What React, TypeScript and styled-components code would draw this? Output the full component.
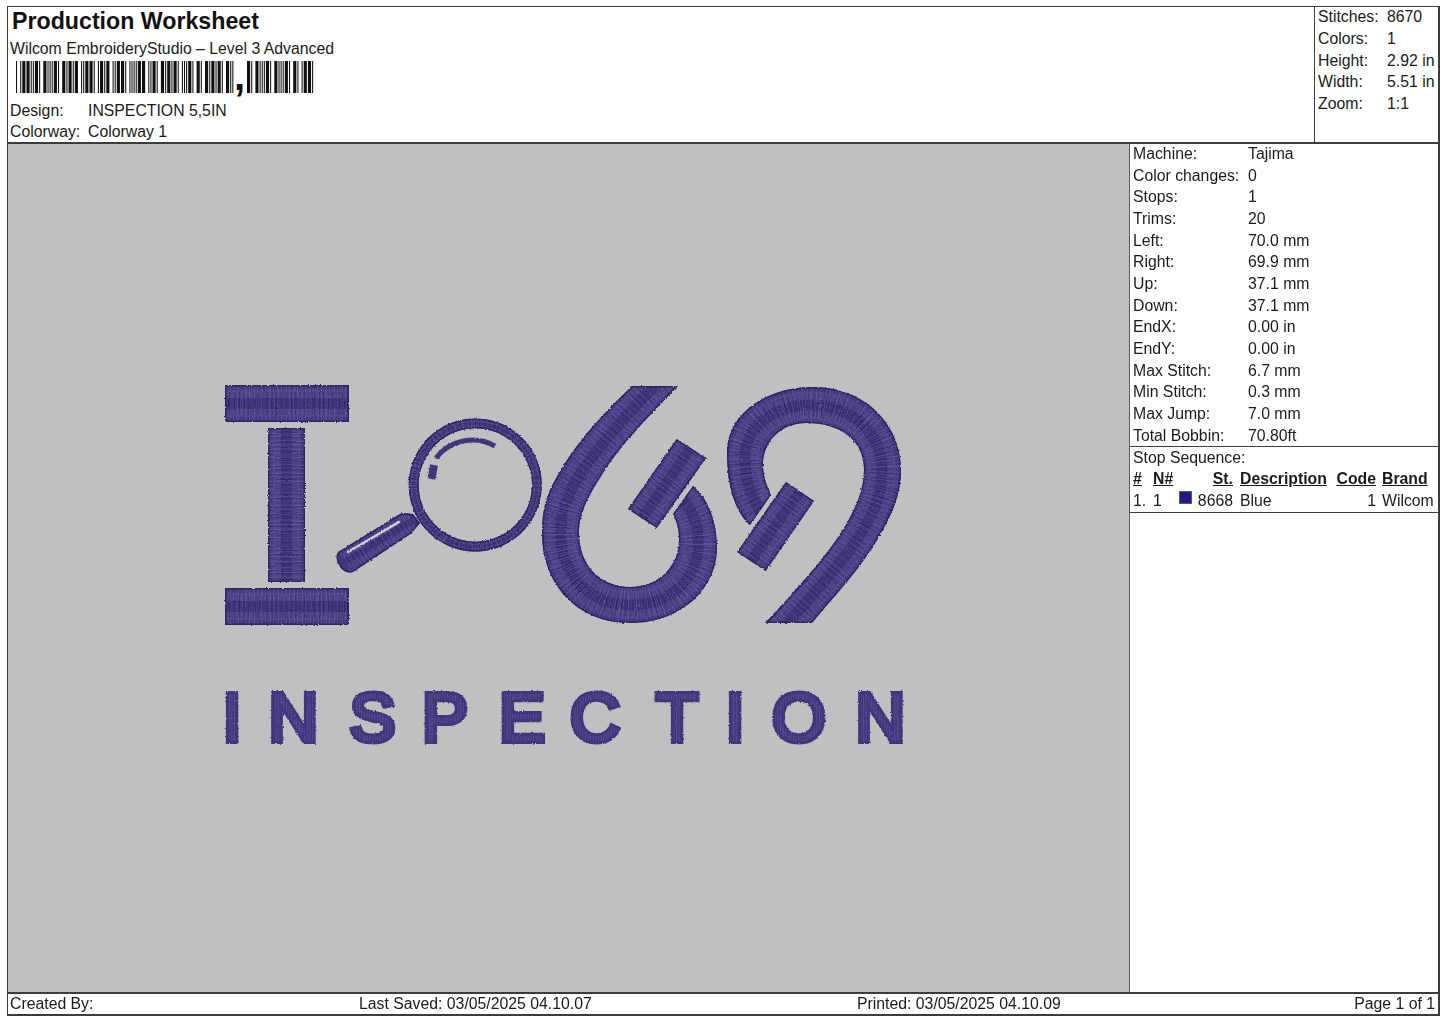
import styled, { createGlobalStyle } from "styled-components";

const GlobalSc = createGlobalStyle`
    html, body {
        margin: 0;
        background: #ffffff;
    }
    body {
        font-family: "Liberation Sans", Arial, sans-serif;
        font-size: 15.8px;
        color: #1a1a1a;
    }
`;

const SheetSc = styled.div`
    box-sizing: border-box;
    width: 1433px;
    height: 1010px;
    margin: 6px 0 0 7px;
    border: 1px solid #3c3c3c;
    border-right-width: 2px;
    border-bottom-width: 2px;
    display: flex;
    flex-direction: column;
`;

const HeaderSc = styled.header`
    height: 135px;
    flex: none;
    display: flex;
    border-bottom: 2px solid #3c3c3c;
`;

const TitleBoxSc = styled.div`
    flex: 1;
    padding: 1px 0 0 2px;
`;

const TitleSc = styled.h1`
    margin: 0 0 0 2px;
    font-size: 23.2px;
    line-height: 27px;
    font-weight: 700;
    color: #111;
`;

const SubtitleSc = styled.div`
    line-height: 21px;
    margin-top: 3px;
`;

const BarcodeSc = styled.svg`
    display: block;
    margin: 2px 0 0 6px;
    overflow: visible;
`;

const DesignRowSc = styled.div`
    display: grid;
    grid-template-columns: 78px 1fr;
    line-height: 21px;
`;

const StatsBoxSc = styled.div`
    width: 124px;
    flex: none;
    box-sizing: border-box;
    border-left: 1px solid #3c3c3c;
    padding-left: 3px;
    & > :first-child {
        margin-top: -1px;
    }
`;

const StatRowSc = styled.div`
    display: grid;
    grid-template-columns: 69px 1fr;
    line-height: 21.75px;
    white-space: nowrap;
`;

const MainSc = styled.main`
    flex: 1;
    min-height: 0;
    display: flex;
`;

const CanvasSc = styled.div`
    width: 1121px;
    flex: none;
    background: #c0c0c0;
    border-right: 1px solid #5a5a5a;
`;

const LogoSc = styled.svg`
    display: block;
    width: 1121px;
    height: 851px;
`;

const SideSc = styled.aside`
    flex: 1;
    min-width: 0;
    display: flex;
    flex-direction: column;
`;

const MachineBoxSc = styled.div`
    height: 303px;
    flex: none;
    box-sizing: border-box;
    padding-left: 3px;
    border-bottom: 1px solid #3c3c3c;
    & > :first-child {
        margin-top: -1px;
    }
`;

const MachineRowSc = styled.div`
    display: grid;
    grid-template-columns: 115px 1fr;
    line-height: 21.65px;
`;

const StopBoxSc = styled.div`
    height: 66px;
    flex: none;
    box-sizing: border-box;
    padding: 1px 0 0 3px;
    border-bottom: 1px solid #3c3c3c;
`;

const StopTitleSc = styled.div`
    line-height: 20px;
`;

const StopGridSc = styled.div`
    display: grid;
    grid-template-columns: 20px 26px 54px 7px 93px 43px 6px 1fr;
    line-height: 21.5px;
    white-space: nowrap;
`;

const HeadCellSc = styled.span<{ $right?: boolean; $col: number }>`
    grid-column: ${props => props.$col};
    font-weight: 700;
    text-decoration: underline;
    text-align: ${props => (props.$right ? "right" : "left")};
`;

const CellSc = styled.span<{ $right?: boolean; $col: number }>`
    grid-column: ${props => props.$col};
    text-align: ${props => (props.$right ? "right" : "left")};
`;

const StitchCellSc = styled(CellSc)`
    position: relative;
`;

const SwatchSc = styled.i`
    position: absolute;
    left: 0;
    top: 1px;
    width: 13px;
    height: 13px;
    background: #1f1a80;
    border: 1px solid #55558a;
    box-sizing: border-box;
`;

const FooterSc = styled.footer`
    height: 20px;
    flex: none;
    display: grid;
    grid-template-columns: 349px 498px 1fr auto;
    padding: 0 3px 0 2px;
    border-top: 2px solid #3c3c3c;
    line-height: 20px;
    white-space: nowrap;
`;

// code 39 bar patterns, 1 is a wide element
const CODE39: Record<string, string> = {
    "*": "010010100",
    " ": "011000100",
    "5": "100110000",
    I: "001001100",
    N: "000010011",
    S: "001000110",
    P: "001010010",
    E: "100011000",
    C: "101001000",
    T: "000010110",
    O: "100010010",
};

const buildBars = (text: string, startX: number, unit: number) => {
    const bars: { x: number; w: number }[] = [];
    let x = startX;
    for (const ch of text) {
        CODE39[ch].split("").forEach((bit, i) => {
            const w = (bit === "1" ? 3 : 1) * unit;
            if (i % 2 === 0) bars.push({ x, w });
            x += w;
        });
        x += unit;
    }
    return bars;
};

const barcodeBars = [
    ...buildBars("*INSPECTION 5", 0, 1.05),
    ...buildBars("5IN*", 231, 1.05),
];

const stats = [
    ["Stitches:", "8670"],
    ["Colors:", "1"],
    ["Height:", "2.92 in"],
    ["Width:", "5.51 in"],
    ["Zoom:", "1:1"],
];

const machine = [
    ["Machine:", "Tajima"],
    ["Color changes:", "0"],
    ["Stops:", "1"],
    ["Trims:", "20"],
    ["Left:", "70.0 mm"],
    ["Right:", "69.9 mm"],
    ["Up:", "37.1 mm"],
    ["Down:", "37.1 mm"],
    ["EndX:", "0.00 in"],
    ["EndY:", "0.00 in"],
    ["Max Stitch:", "6.7 mm"],
    ["Min Stitch:", "0.3 mm"],
    ["Max Jump:", "7.0 mm"],
    ["Total Bobbin:", "70.80ft"],
];

const THREAD = "#40367c";
const THREAD_LIGHT = "#7068aa";
const THREAD_DARK = "#251c58";

// one satin-stitched piece: outline is the shape, spine runs along its middle
const Satin = ({ id, outline, spine, width }: { id: string; outline: string; spine: string; width: number }) => (
    <g>
        <clipPath id={id}>
            <path d={outline} />
        </clipPath>
        <path d={outline} fill={THREAD} />
        <g clipPath={`url(#${id})`} fill="none">
            <path d={spine} stroke={THREAD_LIGHT} strokeWidth={width * 0.74} opacity={0.22} />
            <path d={spine} stroke={THREAD_LIGHT} strokeWidth={width + 10} strokeDasharray="1 1.7 0.6 1.2 1.4 2.1" opacity={0.5} />
            <path d={spine} stroke={THREAD_DARK} strokeWidth={width * 0.3} strokeDasharray="1.1 1.3 2 0.9" opacity={0.55} />
            <path d={spine} stroke={THREAD_DARK} strokeWidth={width * 0.62} strokeDasharray="0.8 3.1 1.2 4.3" opacity={0.4} />
            <path d={outline} stroke={THREAD_DARK} strokeWidth={3} opacity={0.75} />
        </g>
    </g>
);

const rectPath = (x: number, y: number, w: number, h: number) => `M${x} ${y} H${x + w} V${y + h} H${x} Z`;

const SIX = "M632 386 L678 386 C655 410 620 445 603 473 C588 497 579 512 579 533 C579 565 600 587 630 587 C660 587 679 565 679 540 C679 530 677 522 673 514 L693 486 C708 498 717 522 717 547 C717 590 680 623 630 623 C578 623 542 585 542 533 C542 500 552 485 562 468 C580 438 605 412 632 386 Z";
const SIX_SPINE = "M675 366 L655 386 C630 410 600 445 581 473 C567 495 560.5 512 560.5 533 C560.5 575 590 605 630 605 C670 605 698 580 698 543 C698 525 693 512 683 500 L670 485";
const NINE = "M765 623 C790 597 830 553 847 523 C857 505 864 488 864 470 C864 440 840 423 807 423 C780 423 763 442 763 465 C763 475 766 484 771 495 L750 525 C735 512 727 485 727 453 C727 415 765 387 813 387 C865 387 901 425 901 470 C901 497 890 517 880 535 C860 570 835 595 812 623 Z";
const NINE_SPINE = "M770 643 L788 623 C815 592 845 560 865 527 C876 508 882 490 882 470 C882 432 850 405 810 405 C772 405 745 428 745 457 C745 478 750 495 760 510 L775 530";

const RING = "M475.3 418.5 A66.5 66.5 0 1 1 475.2 418.5 Z M475.3 428.3 A56.7 56.7 0 1 0 475.4 428.3 Z";
const RING_SPINE = "M475.3 423.5 A61.5 61.5 0 1 1 475.2 423.5";
const HANDLE = "M338 552 L400 514 C405 512 408 514 413 514 L420 523 C416 528 414 530 412 533 L353 572 C348 574 342 571 339 565 C336 560 336 555 338 552 Z";

const App = () => {
    return (
        <>
            <GlobalSc />
            <SheetSc>
                <HeaderSc>
                    <TitleBoxSc>
                        <TitleSc>Production Worksheet</TitleSc>
                        <SubtitleSc>Wilcom EmbroideryStudio – Level 3 Advanced</SubtitleSc>
                        <BarcodeSc width={300} height={39} viewBox="0 0 300 39">
                            {barcodeBars.map((b, i) => (
                                <rect key={i} x={b.x} y={0} width={b.w} height={32} fill="#111" />
                            ))}
                            <text x={218} y={29} fontFamily="Liberation Sans" fontWeight={700} fontSize={40} fill="#111">,</text>
                        </BarcodeSc>
                        <DesignRowSc>
                            <span>Design:</span>
                            <span>INSPECTION 5,5IN</span>
                        </DesignRowSc>
                        <DesignRowSc>
                            <span>Colorway:</span>
                            <span>Colorway 1</span>
                        </DesignRowSc>
                    </TitleBoxSc>
                    <StatsBoxSc>
                        {stats.map(([label, value]) => (
                            <StatRowSc key={label}>
                                <span>{label}</span>
                                <span>{value}</span>
                            </StatRowSc>
                        ))}
                    </StatsBoxSc>
                </HeaderSc>
                <MainSc>
                    <CanvasSc>
                        <LogoSc viewBox="8 144 1121 851">
                            <defs>
                                <filter id="rough" x="-5%" y="-5%" width="110%" height="110%" colorInterpolationFilters="sRGB">
                                    <feTurbulence type="fractalNoise" baseFrequency="0.6" numOctaves={2} seed={5} result="noise" />
                                    <feDisplacementMap in="SourceGraphic" in2="noise" scale={2.5} xChannelSelector="R" yChannelSelector="G" />
                                </filter>
                                <pattern id="letterStitch" width={2.6} height={6} patternUnits="userSpaceOnUse">
                                    <rect width={2.6} height={6} fill={THREAD} />
                                    <rect width={1} height={6} fill={THREAD_LIGHT} opacity={0.5} />
                                </pattern>
                            </defs>
                            <g filter="url(#rough)">
                                <Satin id="barTop" outline={rectPath(225, 385, 124, 37)} spine="M225 403.5 H349" width={37} />
                                <Satin id="barBottom" outline={rectPath(225, 588, 124, 37)} spine="M225 606.5 H349" width={37} />
                                <Satin id="stem" outline={rectPath(268, 428, 37, 154)} spine="M286.5 428 V582" width={37} />
                                <Satin id="ring" outline={RING} spine={RING_SPINE} width={10} />
                                <path d="M436 458 A46 46 0 0 1 495 446" fill="none" stroke={THREAD} strokeWidth={5} />
                                <path d="M434 465 L431.5 479" fill="none" stroke={THREAD} strokeWidth={8} />
                                <Satin id="handle" outline={HANDLE} spine="M345 562 L412 521" width={22} />
                                <path d="M348 552 L399 522" fill="none" stroke="#d4d4d4" strokeWidth={2.2} strokeLinecap="round" />
                                <Satin id="six" outline={SIX} spine={SIX_SPINE} width={37} />
                                <Satin id="sixBar" outline="M676.7 439 L706 458 L656.7 528 L628 509 Z" spine="M691 448 L642 518" width={35} />
                                <Satin id="nine" outline={NINE} spine={NINE_SPINE} width={37} />
                                <Satin id="nineBar" outline="M786 482 L814 501 L765.7 571 L737 552 Z" spine="M800 491 L751 561" width={35} />
                                <text
                                    x="222.5 268.5 349.5 422 499 570 656 725.5 772 855.5"
                                    y={741}
                                    fontFamily="Liberation Sans"
                                    fontSize={69}
                                    fill="url(#letterStitch)"
                                    stroke={THREAD}
                                    strokeWidth={6}
                                    paintOrder="stroke"
                                >
                                    INSPECTION
                                </text>
                            </g>
                        </LogoSc>
                    </CanvasSc>
                    <SideSc>
                        <MachineBoxSc>
                            {machine.map(([label, value]) => (
                                <MachineRowSc key={label}>
                                    <span>{label}</span>
                                    <span>{value}</span>
                                </MachineRowSc>
                            ))}
                        </MachineBoxSc>
                        <StopBoxSc>
                            <StopTitleSc>Stop Sequence:</StopTitleSc>
                            <StopGridSc>
                                <HeadCellSc $col={1}>#</HeadCellSc>
                                <HeadCellSc $col={2}>N#</HeadCellSc>
                                <HeadCellSc $col={3} $right>St.</HeadCellSc>
                                <HeadCellSc $col={5}>Description</HeadCellSc>
                                <HeadCellSc $col={6} $right>Code</HeadCellSc>
                                <HeadCellSc $col={8}>Brand</HeadCellSc>
                                <CellSc $col={1}>1.</CellSc>
                                <CellSc $col={2}>1</CellSc>
                                <StitchCellSc $col={3} $right><SwatchSc />8668</StitchCellSc>
                                <CellSc $col={5}>Blue</CellSc>
                                <CellSc $col={6} $right>1</CellSc>
                                <CellSc $col={8}>Wilcom</CellSc>
                            </StopGridSc>
                        </StopBoxSc>
                    </SideSc>
                </MainSc>
                <FooterSc>
                    <span>Created By:</span>
                    <span>Last Saved: 03/05/2025 04.10.07</span>
                    <span>Printed: 03/05/2025 04.10.09</span>
                    <span>Page 1 of 1</span>
                </FooterSc>
            </SheetSc>
        </>
    );
};

export default App;
